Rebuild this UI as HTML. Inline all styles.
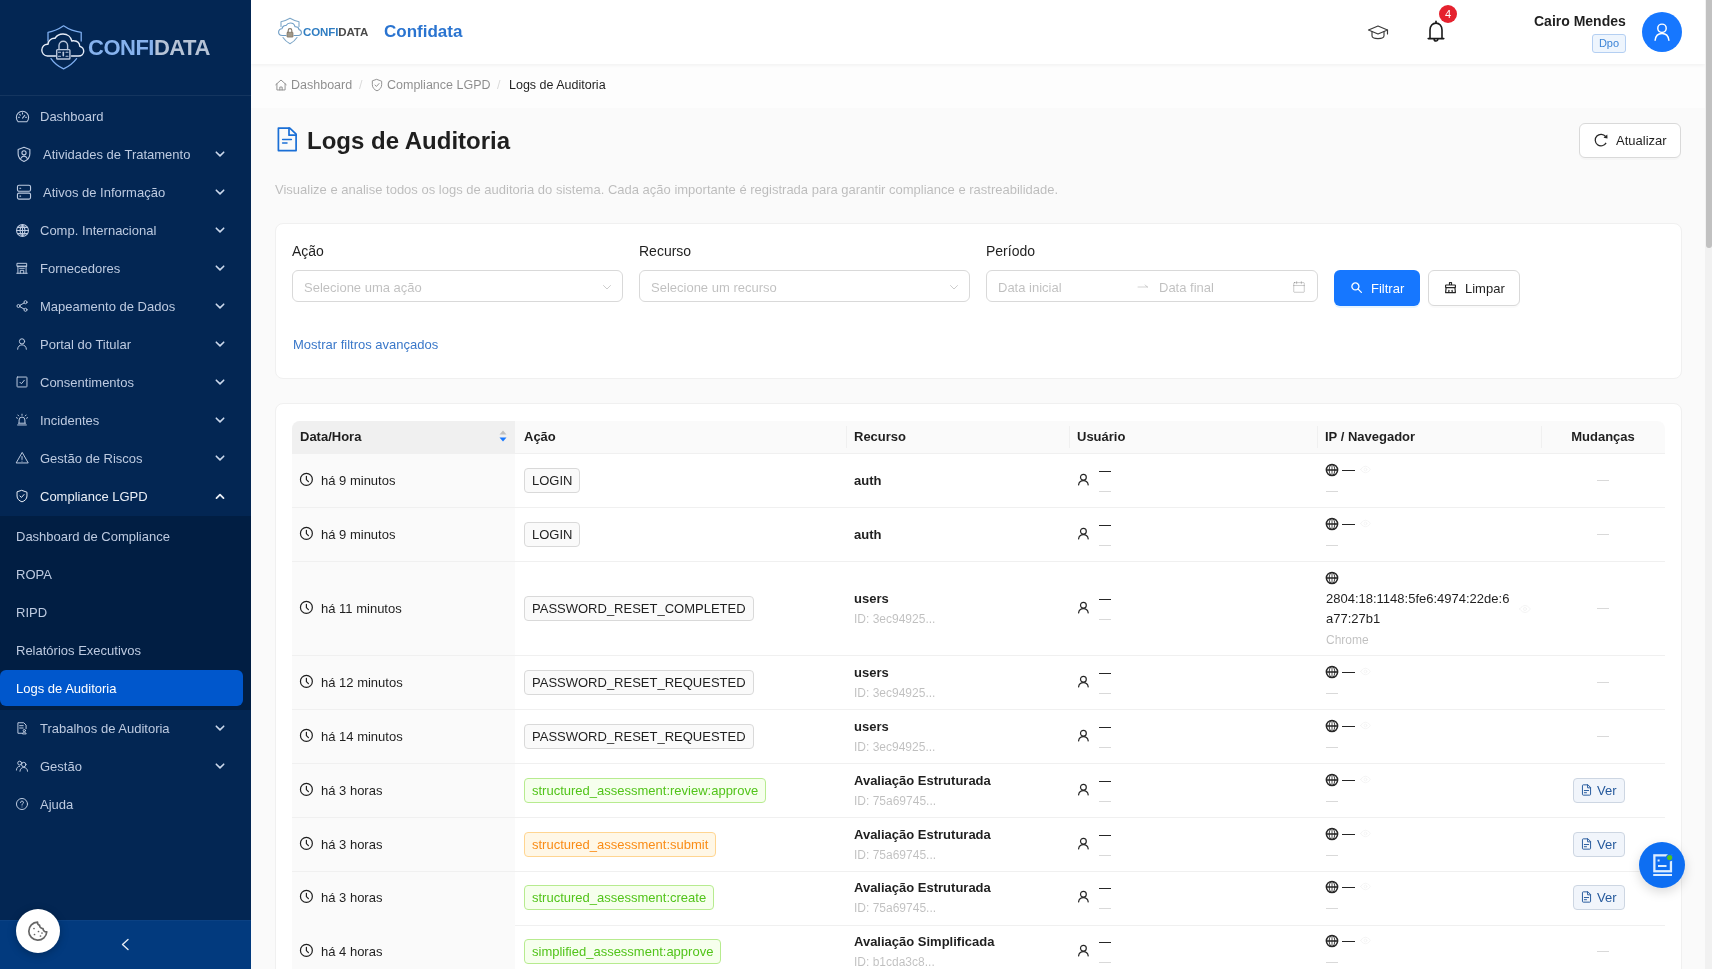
<!DOCTYPE html>
<html><head><meta charset="utf-8"><title>Logs de Auditoria</title>
<style>
*{box-sizing:border-box;margin:0;padding:0}
.g{will-change:transform}
html,body{width:1712px;height:969px;overflow:hidden;font-family:"Liberation Sans",sans-serif;font-size:13px;color:rgba(0,0,0,0.88);background:#fafafa;position:relative}
#side{position:absolute;left:0;top:0;width:251px;height:969px;background:#032653;overflow:hidden;z-index:2}
#side .st{position:absolute;height:38px;line-height:38px;font-size:13px;white-space:nowrap;will-change:transform}
#sub{position:absolute;left:0;top:516px;width:251px;height:194px;background:#011e43}
#crumb{position:absolute;left:251px;top:64px;width:1454px;height:44px;background:#fdfdfd}
#hdr{position:absolute;left:251px;top:0;width:1454px;height:64px;background:#fff;box-shadow:0 1px 4px rgba(0,0,0,0.06);z-index:1}
#sb{position:absolute;left:1705px;top:0;width:7px;height:969px;background:#f1f1f1;z-index:3}
#sb .th{position:absolute;left:1px;top:0;width:6px;height:248px;background:#c1c1c1;border-radius:0 0 3px 3px}
</style></head>
<body>
<div id="crumb"></div>
<svg style="position:absolute;left:274px;top:78px;width:14px;height:14px" viewBox="0 0 24 24" fill="none" stroke="#8c8c8c" stroke-width="1.6" stroke-linecap="round" stroke-linejoin="round"><path d="M3 11.5L12 3.5l9 8"/><path d="M5 10v10.5h14V10"/><path d="M10 20.5v-5h4v5"/></svg>
<div style="position:absolute;left:291px;top:74.7px;font-size:12.5px;line-height:20px;color:rgba(0,0,0,0.45);white-space:nowrap;will-change:transform;">Dashboard</div>
<div style="position:absolute;left:359px;top:74.7px;font-size:12.5px;line-height:20px;color:rgba(0,0,0,0.15);white-space:nowrap;will-change:transform;">/</div>
<svg style="position:absolute;left:370px;top:78px;width:14px;height:14px" viewBox="0 0 24 24" fill="none" stroke="#8c8c8c" stroke-width="1.6" stroke-linecap="round" stroke-linejoin="round"><path d="M12 2.5l8 3v6c0 5-3.5 8.8-8 10.5c-4.5-1.7-8-5.5-8-10.5v-6z"/><path d="M8.5 12l2.5 2.5l4.5-5"/></svg>
<div style="position:absolute;left:387px;top:74.7px;font-size:12.5px;line-height:20px;color:rgba(0,0,0,0.45);white-space:nowrap;will-change:transform;">Compliance LGPD</div>
<div style="position:absolute;left:497px;top:74.7px;font-size:12.5px;line-height:20px;color:rgba(0,0,0,0.15);white-space:nowrap;will-change:transform;">/</div>
<div style="position:absolute;left:509px;top:74.7px;font-size:12.5px;line-height:20px;color:rgba(0,0,0,0.88);white-space:nowrap;will-change:transform;">Logs de Auditoria</div>
<svg style="position:absolute;left:276px;top:125px;width:22px;height:28px" viewBox="0 0 22 28" fill="none" stroke="#1a6fd6" stroke-width="1.7" stroke-linecap="round" stroke-linejoin="round"><path d="M2.4 3.1H13.8L20.1 9.1V25.6H2.4z"/><path d="M13 3.1V10.2H20.1"/><path d="M6.6 14.5h8.8M6.6 18h4.4" stroke-width="1.5"/></svg>
<div style="position:absolute;left:307px;top:126.0px;font-size:24px;line-height:30px;color:rgba(0,0,0,0.88);font-weight:bold;white-space:nowrap;will-change:transform;">Logs de Auditoria</div>
<div style="position:absolute;left:1579px;top:123px;width:102px;height:35px;background:#fff;border:1px solid #d9d9d9;border-radius:6px;box-shadow:0 2px 0 rgba(0,0,0,0.02)"></div>
<svg style="position:absolute;left:1593px;top:132px;width:16px;height:16px" viewBox="0 0 16 16" fill="none" stroke="#262626" stroke-width="1.25"><path d="M12.6 4.5A5.8 5.8 0 1 0 13.1 10.9"/><path d="M14.3 2.4L14.5 6.5L10.5 5.7Z" fill="#262626" stroke="none"/></svg>
<div style="position:absolute;left:1616px;top:130.5px;font-size:13px;line-height:20px;color:rgba(0,0,0,0.88);white-space:nowrap;will-change:transform;">Atualizar</div>
<div style="position:absolute;left:275px;top:179.5px;font-size:13px;line-height:20px;color:rgba(0,0,0,0.25);white-space:nowrap;will-change:transform;">Visualize e analise todos os logs de auditoria do sistema. Cada ação importante é registrada para garantir compliance e rastreabilidade.</div>
<div style="position:absolute;left:275px;top:223px;width:1407px;height:156px;background:#fff;border:1px solid #f0f0f0;border-radius:8px"></div>
<div style="position:absolute;left:292px;top:240.5px;font-size:14px;line-height:20px;color:rgba(0,0,0,0.88);white-space:nowrap;will-change:transform;">Ação</div>
<div style="position:absolute;left:639px;top:240.5px;font-size:14px;line-height:20px;color:rgba(0,0,0,0.88);white-space:nowrap;will-change:transform;">Recurso</div>
<div style="position:absolute;left:986px;top:240.5px;font-size:14px;line-height:20px;color:rgba(0,0,0,0.88);white-space:nowrap;will-change:transform;">Período</div>
<div style="position:absolute;left:292px;top:270px;width:331px;height:32px;background:#fff;border:1px solid #d9d9d9;border-radius:6px"></div>
<div style="position:absolute;left:304px;top:277.5px;font-size:13px;line-height:20px;color:rgba(0,0,0,0.25);white-space:nowrap;will-change:transform;">Selecione uma ação</div>
<svg style="position:absolute;left:601px;top:281px;width:12px;height:12px" viewBox="0 0 24 24" fill="none" stroke="rgba(0,0,0,0.25)" stroke-width="1.6" stroke-linecap="round" stroke-linejoin="round"><path d="M5 9l7 7l7-7"/></svg>
<div style="position:absolute;left:639px;top:270px;width:331px;height:32px;background:#fff;border:1px solid #d9d9d9;border-radius:6px"></div>
<div style="position:absolute;left:651px;top:277.5px;font-size:13px;line-height:20px;color:rgba(0,0,0,0.25);white-space:nowrap;will-change:transform;">Selecione um recurso</div>
<svg style="position:absolute;left:948px;top:281px;width:12px;height:12px" viewBox="0 0 24 24" fill="none" stroke="rgba(0,0,0,0.25)" stroke-width="1.6" stroke-linecap="round" stroke-linejoin="round"><path d="M5 9l7 7l7-7"/></svg>
<div style="position:absolute;left:986px;top:270px;width:332px;height:32px;background:#fff;border:1px solid #d9d9d9;border-radius:6px"></div>
<div style="position:absolute;left:998px;top:278.0px;font-size:13px;line-height:20px;color:rgba(0,0,0,0.25);white-space:nowrap;will-change:transform;">Data inicial</div>
<svg style="position:absolute;left:1136px;top:281px;width:14px;height:12px" viewBox="0 0 24 24" fill="none" stroke="rgba(0,0,0,0.25)" stroke-width="1.4" stroke-linecap="round" stroke-linejoin="round"><path d="M2 12h19M16 8l5 4"/></svg>
<div style="position:absolute;left:1159px;top:278.0px;font-size:13px;line-height:20px;color:rgba(0,0,0,0.25);white-space:nowrap;will-change:transform;">Data final</div>
<svg style="position:absolute;left:1292px;top:280px;width:14px;height:14px" viewBox="0 0 24 24" fill="none" stroke="rgba(0,0,0,0.25)" stroke-width="1.4" stroke-linecap="round" stroke-linejoin="round"><rect x="3" y="4.5" width="18" height="16.5" rx="1"/><path d="M3 9.5h18M8 2.5v4M16 2.5v4"/></svg>
<div style="position:absolute;left:1334px;top:270px;width:86px;height:36px;background:#1677ff;border-radius:6px;box-shadow:0 2px 0 rgba(5,145,255,0.1)"></div>
<svg style="position:absolute;left:1350px;top:281px;width:13px;height:13px" viewBox="0 0 24 24" fill="none" stroke="#fff" stroke-width="2.4" stroke-linecap="round" stroke-linejoin="round"><circle cx="10" cy="10" r="6.5"/><path d="M15 15l6 6"/></svg>
<div style="position:absolute;left:1371px;top:278.5px;font-size:13px;line-height:20px;color:#fff;white-space:nowrap;will-change:transform;">Filtrar</div>
<div style="position:absolute;left:1428px;top:270px;width:92px;height:36px;background:#fff;border:1px solid #d9d9d9;border-radius:6px;box-shadow:0 2px 0 rgba(0,0,0,0.02)"></div>
<svg style="position:absolute;left:1442px;top:279px;width:18px;height:18px" viewBox="0 0 18 18" fill="none" stroke="#262626" stroke-width="1.2" stroke-linejoin="round"><path d="M7.5 6V3.5H9.5V6"/><rect x="3.6" y="6" width="9.8" height="2.6" rx="0.6"/><path d="M4.1 8.6L3.6 13.6H13.4L12.9 8.6"/><path d="M6.7 13.6L7 10.9M10.3 13.6L10 10.9"/></svg>
<div style="position:absolute;left:1465px;top:278.5px;font-size:13px;line-height:20px;color:rgba(0,0,0,0.88);white-space:nowrap;will-change:transform;">Limpar</div>
<div style="position:absolute;left:293px;top:334.5px;font-size:13px;line-height:20px;color:#3a78c9;white-space:nowrap;will-change:transform;">Mostrar filtros avançados</div>
<div style="position:absolute;left:275px;top:403px;width:1407px;height:600px;background:#fff;border:1px solid #f0f0f0;border-radius:8px"></div>
<div style="position:absolute;left:292px;top:421px;width:1373px;height:33px;background:#fafafa;border-radius:8px 8px 0 0;border-bottom:1px solid #f0f0f0"></div>
<div style="position:absolute;left:292px;top:421px;width:223px;height:33px;background:#f0f0f0;border-radius:8px 0 0 0;border-bottom:1px solid #f0f0f0"></div>
<div style="position:absolute;left:300px;top:427.0px;font-size:13px;line-height:20px;color:rgba(0,0,0,0.88);font-weight:bold;white-space:nowrap;will-change:transform;">Data/Hora</div>
<svg style="position:absolute;left:498px;top:429px;width:10px;height:14px;" viewBox="0 0 10 14"><path d="M1.5 5.5L5 1.5L8.5 5.5z" fill="rgba(0,0,0,0.2)"/><path d="M1.5 8.5L5 12.5L8.5 8.5z" fill="#1677ff"/></svg>
<div style="position:absolute;left:846px;top:426px;width:1px;height:22px;background:#f0f0f0"></div>
<div style="position:absolute;left:1069px;top:426px;width:1px;height:22px;background:#f0f0f0"></div>
<div style="position:absolute;left:1317px;top:426px;width:1px;height:22px;background:#f0f0f0"></div>
<div style="position:absolute;left:1541px;top:426px;width:1px;height:22px;background:#f0f0f0"></div>
<div style="position:absolute;left:524px;top:427.0px;font-size:13px;line-height:20px;color:rgba(0,0,0,0.88);font-weight:bold;white-space:nowrap;will-change:transform;">Ação</div>
<div style="position:absolute;left:854px;top:427.0px;font-size:13px;line-height:20px;color:rgba(0,0,0,0.88);font-weight:bold;white-space:nowrap;will-change:transform;">Recurso</div>
<div style="position:absolute;left:1077px;top:427.0px;font-size:13px;line-height:20px;color:rgba(0,0,0,0.88);font-weight:bold;white-space:nowrap;will-change:transform;">Usuário</div>
<div style="position:absolute;left:1325px;top:427.0px;font-size:13px;line-height:20px;color:rgba(0,0,0,0.88);font-weight:bold;white-space:nowrap;will-change:transform;">IP / Navegador</div>
<div class="g" style="position:absolute;left:1541px;top:427px;width:124px;height:20px;font-size:13px;line-height:20px;font-weight:bold;color:rgba(0,0,0,0.88);text-align:center">Mudanças</div>
<div style="position:absolute;left:292px;top:454px;width:223px;height:54px;background:#fafafa;border-bottom:1px solid #f0f0f0"></div>
<div style="position:absolute;left:515px;top:454px;width:1150px;height:54px;border-bottom:1px solid #f0f0f0"></div>
<svg style="position:absolute;left:299px;top:472.0px;width:15px;height:15px" viewBox="0 0 15 15" fill="none" stroke="#1f1f1f" stroke-width="1.2" stroke-linecap="round" stroke-linejoin="round"><circle cx="7.4" cy="7.4" r="5.95"/><path d="M7.4 4.3V7.6L9.4 9.6"/></svg>
<div style="position:absolute;left:321px;top:471.0px;font-size:13px;line-height:20px;color:rgba(0,0,0,0.88);white-space:nowrap;will-change:transform;">há 9 minutos</div>
<div class="g" style="position:absolute;left:524px;top:467.5px;height:25px;padding:0 7px;border:1px solid #d9d9d9;background:#fafafa;color:rgba(0,0,0,0.88);border-radius:4px;font-size:13px;line-height:23px;white-space:nowrap">LOGIN</div>
<div style="position:absolute;left:854px;top:471.0px;font-size:13px;line-height:20px;color:rgba(0,0,0,0.88);font-weight:bold;white-space:nowrap;will-change:transform;">auth</div>
<svg style="position:absolute;left:1077px;top:473.0px;width:13px;height:14px" viewBox="0 0 13 14" fill="none" stroke="#262626" stroke-width="1.2" stroke-linecap="round" stroke-linejoin="round"><circle cx="6.4" cy="4.2" r="2.9"/><path d="M1.6 11.8C2 9.2 3.9 7.7 6.4 7.7S10.8 9.2 11.2 11.8"/></svg>
<div style="position:absolute;left:1099px;top:470.5px;width:12px;height:1.6px;background:#262626"></div>
<div style="position:absolute;left:1099px;top:490.5px;width:12px;height:1.2px;background:#d9d9d9"></div>
<svg style="position:absolute;left:1325px;top:462.5px;width:14px;height:14px" viewBox="0 0 14 14" fill="none" stroke="#262626" stroke-width="1.2" stroke-linecap="round" stroke-linejoin="round"><circle cx="7" cy="7" r="5.6" stroke-width="1.5"/><path d="M1.5 7h11" stroke-width="1.3"/><path d="M7 1.5v11" stroke-width="0.8"/><ellipse cx="7" cy="7" rx="2.8" ry="5.6" stroke-width="0.9"/></svg>
<div style="position:absolute;left:1342px;top:469.5px;width:13px;height:1.6px;background:#262626"></div>
<svg style="position:absolute;left:1360px;top:464.0px;width:11px;height:11px" viewBox="0 0 24 24" fill="none" stroke="#f3f3f3" stroke-width="1.8" stroke-linecap="round" stroke-linejoin="round"><path d="M1.5 12S5.5 5 12 5s10.5 7 10.5 7s-4 7-10.5 7S1.5 12 1.5 12z"/><circle cx="12" cy="12" r="3"/></svg>
<div style="position:absolute;left:1326px;top:490.5px;width:12px;height:1.2px;background:#d9d9d9"></div>
<div style="position:absolute;left:1597px;top:480.0px;width:12px;height:1.2px;background:#d9d9d9"></div>
<div style="position:absolute;left:292px;top:508px;width:223px;height:54px;background:#fafafa;border-bottom:1px solid #f0f0f0"></div>
<div style="position:absolute;left:515px;top:508px;width:1150px;height:54px;border-bottom:1px solid #f0f0f0"></div>
<svg style="position:absolute;left:299px;top:526.0px;width:15px;height:15px" viewBox="0 0 15 15" fill="none" stroke="#1f1f1f" stroke-width="1.2" stroke-linecap="round" stroke-linejoin="round"><circle cx="7.4" cy="7.4" r="5.95"/><path d="M7.4 4.3V7.6L9.4 9.6"/></svg>
<div style="position:absolute;left:321px;top:525.0px;font-size:13px;line-height:20px;color:rgba(0,0,0,0.88);white-space:nowrap;will-change:transform;">há 9 minutos</div>
<div class="g" style="position:absolute;left:524px;top:521.5px;height:25px;padding:0 7px;border:1px solid #d9d9d9;background:#fafafa;color:rgba(0,0,0,0.88);border-radius:4px;font-size:13px;line-height:23px;white-space:nowrap">LOGIN</div>
<div style="position:absolute;left:854px;top:525.0px;font-size:13px;line-height:20px;color:rgba(0,0,0,0.88);font-weight:bold;white-space:nowrap;will-change:transform;">auth</div>
<svg style="position:absolute;left:1077px;top:527.0px;width:13px;height:14px" viewBox="0 0 13 14" fill="none" stroke="#262626" stroke-width="1.2" stroke-linecap="round" stroke-linejoin="round"><circle cx="6.4" cy="4.2" r="2.9"/><path d="M1.6 11.8C2 9.2 3.9 7.7 6.4 7.7S10.8 9.2 11.2 11.8"/></svg>
<div style="position:absolute;left:1099px;top:524.5px;width:12px;height:1.6px;background:#262626"></div>
<div style="position:absolute;left:1099px;top:544.5px;width:12px;height:1.2px;background:#d9d9d9"></div>
<svg style="position:absolute;left:1325px;top:516.5px;width:14px;height:14px" viewBox="0 0 14 14" fill="none" stroke="#262626" stroke-width="1.2" stroke-linecap="round" stroke-linejoin="round"><circle cx="7" cy="7" r="5.6" stroke-width="1.5"/><path d="M1.5 7h11" stroke-width="1.3"/><path d="M7 1.5v11" stroke-width="0.8"/><ellipse cx="7" cy="7" rx="2.8" ry="5.6" stroke-width="0.9"/></svg>
<div style="position:absolute;left:1342px;top:523.5px;width:13px;height:1.6px;background:#262626"></div>
<svg style="position:absolute;left:1360px;top:518.0px;width:11px;height:11px" viewBox="0 0 24 24" fill="none" stroke="#f3f3f3" stroke-width="1.8" stroke-linecap="round" stroke-linejoin="round"><path d="M1.5 12S5.5 5 12 5s10.5 7 10.5 7s-4 7-10.5 7S1.5 12 1.5 12z"/><circle cx="12" cy="12" r="3"/></svg>
<div style="position:absolute;left:1326px;top:544.5px;width:12px;height:1.2px;background:#d9d9d9"></div>
<div style="position:absolute;left:1597px;top:534.0px;width:12px;height:1.2px;background:#d9d9d9"></div>
<div style="position:absolute;left:292px;top:562px;width:223px;height:94px;background:#fafafa;border-bottom:1px solid #f0f0f0"></div>
<div style="position:absolute;left:515px;top:562px;width:1150px;height:94px;border-bottom:1px solid #f0f0f0"></div>
<svg style="position:absolute;left:299px;top:600.0px;width:15px;height:15px" viewBox="0 0 15 15" fill="none" stroke="#1f1f1f" stroke-width="1.2" stroke-linecap="round" stroke-linejoin="round"><circle cx="7.4" cy="7.4" r="5.95"/><path d="M7.4 4.3V7.6L9.4 9.6"/></svg>
<div style="position:absolute;left:321px;top:599.0px;font-size:13px;line-height:20px;color:rgba(0,0,0,0.88);white-space:nowrap;will-change:transform;">há 11 minutos</div>
<div class="g" style="position:absolute;left:524px;top:595.5px;height:25px;padding:0 7px;border:1px solid #d9d9d9;background:#fafafa;color:rgba(0,0,0,0.88);border-radius:4px;font-size:13px;line-height:23px;white-space:nowrap">PASSWORD_RESET_COMPLETED</div>
<div style="position:absolute;left:854px;top:589.0px;font-size:13px;line-height:20px;color:rgba(0,0,0,0.88);font-weight:bold;white-space:nowrap;will-change:transform;">users</div>
<div style="position:absolute;left:854px;top:609.0px;font-size:12px;line-height:20px;color:rgba(0,0,0,0.25);white-space:nowrap;will-change:transform;">ID: 3ec94925...</div>
<svg style="position:absolute;left:1077px;top:601.0px;width:13px;height:14px" viewBox="0 0 13 14" fill="none" stroke="#262626" stroke-width="1.2" stroke-linecap="round" stroke-linejoin="round"><circle cx="6.4" cy="4.2" r="2.9"/><path d="M1.6 11.8C2 9.2 3.9 7.7 6.4 7.7S10.8 9.2 11.2 11.8"/></svg>
<div style="position:absolute;left:1099px;top:598.5px;width:12px;height:1.6px;background:#262626"></div>
<div style="position:absolute;left:1099px;top:618.5px;width:12px;height:1.2px;background:#d9d9d9"></div>
<svg style="position:absolute;left:1325px;top:570.5px;width:14px;height:14px" viewBox="0 0 14 14" fill="none" stroke="#262626" stroke-width="1.2" stroke-linecap="round" stroke-linejoin="round"><circle cx="7" cy="7" r="5.6" stroke-width="1.5"/><path d="M1.5 7h11" stroke-width="1.3"/><path d="M7 1.5v11" stroke-width="0.8"/><ellipse cx="7" cy="7" rx="2.8" ry="5.6" stroke-width="0.9"/></svg>
<div style="position:absolute;left:1326px;top:589.0px;font-size:13px;line-height:20px;color:rgba(0,0,0,0.88);white-space:nowrap;will-change:transform;">2804:18:1148:5fe6:4974:22de:6</div>
<div style="position:absolute;left:1326px;top:609.0px;font-size:13px;line-height:20px;color:rgba(0,0,0,0.88);white-space:nowrap;will-change:transform;">a77:27b1</div>
<div style="position:absolute;left:1326px;top:629.5px;font-size:12px;line-height:20px;color:rgba(0,0,0,0.25);white-space:nowrap;will-change:transform;">Chrome</div>
<svg style="position:absolute;left:1519px;top:603px;width:12px;height:12px" viewBox="0 0 24 24" fill="none" stroke="#f3f3f3" stroke-width="1.8" stroke-linecap="round" stroke-linejoin="round"><path d="M1.5 12S5.5 5 12 5s10.5 7 10.5 7s-4 7-10.5 7S1.5 12 1.5 12z"/><circle cx="12" cy="12" r="3"/></svg>
<div style="position:absolute;left:1597px;top:608.0px;width:12px;height:1.2px;background:#d9d9d9"></div>
<div style="position:absolute;left:292px;top:656px;width:223px;height:54px;background:#fafafa;border-bottom:1px solid #f0f0f0"></div>
<div style="position:absolute;left:515px;top:656px;width:1150px;height:54px;border-bottom:1px solid #f0f0f0"></div>
<svg style="position:absolute;left:299px;top:674.0px;width:15px;height:15px" viewBox="0 0 15 15" fill="none" stroke="#1f1f1f" stroke-width="1.2" stroke-linecap="round" stroke-linejoin="round"><circle cx="7.4" cy="7.4" r="5.95"/><path d="M7.4 4.3V7.6L9.4 9.6"/></svg>
<div style="position:absolute;left:321px;top:673.0px;font-size:13px;line-height:20px;color:rgba(0,0,0,0.88);white-space:nowrap;will-change:transform;">há 12 minutos</div>
<div class="g" style="position:absolute;left:524px;top:669.5px;height:25px;padding:0 7px;border:1px solid #d9d9d9;background:#fafafa;color:rgba(0,0,0,0.88);border-radius:4px;font-size:13px;line-height:23px;white-space:nowrap">PASSWORD_RESET_REQUESTED</div>
<div style="position:absolute;left:854px;top:663.0px;font-size:13px;line-height:20px;color:rgba(0,0,0,0.88);font-weight:bold;white-space:nowrap;will-change:transform;">users</div>
<div style="position:absolute;left:854px;top:683.0px;font-size:12px;line-height:20px;color:rgba(0,0,0,0.25);white-space:nowrap;will-change:transform;">ID: 3ec94925...</div>
<svg style="position:absolute;left:1077px;top:675.0px;width:13px;height:14px" viewBox="0 0 13 14" fill="none" stroke="#262626" stroke-width="1.2" stroke-linecap="round" stroke-linejoin="round"><circle cx="6.4" cy="4.2" r="2.9"/><path d="M1.6 11.8C2 9.2 3.9 7.7 6.4 7.7S10.8 9.2 11.2 11.8"/></svg>
<div style="position:absolute;left:1099px;top:672.5px;width:12px;height:1.6px;background:#262626"></div>
<div style="position:absolute;left:1099px;top:692.5px;width:12px;height:1.2px;background:#d9d9d9"></div>
<svg style="position:absolute;left:1325px;top:664.5px;width:14px;height:14px" viewBox="0 0 14 14" fill="none" stroke="#262626" stroke-width="1.2" stroke-linecap="round" stroke-linejoin="round"><circle cx="7" cy="7" r="5.6" stroke-width="1.5"/><path d="M1.5 7h11" stroke-width="1.3"/><path d="M7 1.5v11" stroke-width="0.8"/><ellipse cx="7" cy="7" rx="2.8" ry="5.6" stroke-width="0.9"/></svg>
<div style="position:absolute;left:1342px;top:671.5px;width:13px;height:1.6px;background:#262626"></div>
<svg style="position:absolute;left:1360px;top:666.0px;width:11px;height:11px" viewBox="0 0 24 24" fill="none" stroke="#f3f3f3" stroke-width="1.8" stroke-linecap="round" stroke-linejoin="round"><path d="M1.5 12S5.5 5 12 5s10.5 7 10.5 7s-4 7-10.5 7S1.5 12 1.5 12z"/><circle cx="12" cy="12" r="3"/></svg>
<div style="position:absolute;left:1326px;top:692.5px;width:12px;height:1.2px;background:#d9d9d9"></div>
<div style="position:absolute;left:1597px;top:682.0px;width:12px;height:1.2px;background:#d9d9d9"></div>
<div style="position:absolute;left:292px;top:710px;width:223px;height:54px;background:#fafafa;border-bottom:1px solid #f0f0f0"></div>
<div style="position:absolute;left:515px;top:710px;width:1150px;height:54px;border-bottom:1px solid #f0f0f0"></div>
<svg style="position:absolute;left:299px;top:728.0px;width:15px;height:15px" viewBox="0 0 15 15" fill="none" stroke="#1f1f1f" stroke-width="1.2" stroke-linecap="round" stroke-linejoin="round"><circle cx="7.4" cy="7.4" r="5.95"/><path d="M7.4 4.3V7.6L9.4 9.6"/></svg>
<div style="position:absolute;left:321px;top:727.0px;font-size:13px;line-height:20px;color:rgba(0,0,0,0.88);white-space:nowrap;will-change:transform;">há 14 minutos</div>
<div class="g" style="position:absolute;left:524px;top:723.5px;height:25px;padding:0 7px;border:1px solid #d9d9d9;background:#fafafa;color:rgba(0,0,0,0.88);border-radius:4px;font-size:13px;line-height:23px;white-space:nowrap">PASSWORD_RESET_REQUESTED</div>
<div style="position:absolute;left:854px;top:717.0px;font-size:13px;line-height:20px;color:rgba(0,0,0,0.88);font-weight:bold;white-space:nowrap;will-change:transform;">users</div>
<div style="position:absolute;left:854px;top:737.0px;font-size:12px;line-height:20px;color:rgba(0,0,0,0.25);white-space:nowrap;will-change:transform;">ID: 3ec94925...</div>
<svg style="position:absolute;left:1077px;top:729.0px;width:13px;height:14px" viewBox="0 0 13 14" fill="none" stroke="#262626" stroke-width="1.2" stroke-linecap="round" stroke-linejoin="round"><circle cx="6.4" cy="4.2" r="2.9"/><path d="M1.6 11.8C2 9.2 3.9 7.7 6.4 7.7S10.8 9.2 11.2 11.8"/></svg>
<div style="position:absolute;left:1099px;top:726.5px;width:12px;height:1.6px;background:#262626"></div>
<div style="position:absolute;left:1099px;top:746.5px;width:12px;height:1.2px;background:#d9d9d9"></div>
<svg style="position:absolute;left:1325px;top:718.5px;width:14px;height:14px" viewBox="0 0 14 14" fill="none" stroke="#262626" stroke-width="1.2" stroke-linecap="round" stroke-linejoin="round"><circle cx="7" cy="7" r="5.6" stroke-width="1.5"/><path d="M1.5 7h11" stroke-width="1.3"/><path d="M7 1.5v11" stroke-width="0.8"/><ellipse cx="7" cy="7" rx="2.8" ry="5.6" stroke-width="0.9"/></svg>
<div style="position:absolute;left:1342px;top:725.5px;width:13px;height:1.6px;background:#262626"></div>
<svg style="position:absolute;left:1360px;top:720.0px;width:11px;height:11px" viewBox="0 0 24 24" fill="none" stroke="#f3f3f3" stroke-width="1.8" stroke-linecap="round" stroke-linejoin="round"><path d="M1.5 12S5.5 5 12 5s10.5 7 10.5 7s-4 7-10.5 7S1.5 12 1.5 12z"/><circle cx="12" cy="12" r="3"/></svg>
<div style="position:absolute;left:1326px;top:746.5px;width:12px;height:1.2px;background:#d9d9d9"></div>
<div style="position:absolute;left:1597px;top:736.0px;width:12px;height:1.2px;background:#d9d9d9"></div>
<div style="position:absolute;left:292px;top:764px;width:223px;height:54px;background:#fafafa;border-bottom:1px solid #f0f0f0"></div>
<div style="position:absolute;left:515px;top:764px;width:1150px;height:54px;border-bottom:1px solid #f0f0f0"></div>
<svg style="position:absolute;left:299px;top:782.0px;width:15px;height:15px" viewBox="0 0 15 15" fill="none" stroke="#1f1f1f" stroke-width="1.2" stroke-linecap="round" stroke-linejoin="round"><circle cx="7.4" cy="7.4" r="5.95"/><path d="M7.4 4.3V7.6L9.4 9.6"/></svg>
<div style="position:absolute;left:321px;top:781.0px;font-size:13px;line-height:20px;color:rgba(0,0,0,0.88);white-space:nowrap;will-change:transform;">há 3 horas</div>
<div class="g" style="position:absolute;left:524px;top:777.5px;height:25px;padding:0 7px;border:1px solid #b7eb8f;background:#f6ffed;color:#52c41a;border-radius:4px;font-size:13px;line-height:23px;white-space:nowrap">structured_assessment:review:approve</div>
<div style="position:absolute;left:854px;top:771.0px;font-size:13px;line-height:20px;color:rgba(0,0,0,0.88);font-weight:bold;white-space:nowrap;will-change:transform;">Avaliação Estruturada</div>
<div style="position:absolute;left:854px;top:791.0px;font-size:12px;line-height:20px;color:rgba(0,0,0,0.25);white-space:nowrap;will-change:transform;">ID: 75a69745...</div>
<svg style="position:absolute;left:1077px;top:783.0px;width:13px;height:14px" viewBox="0 0 13 14" fill="none" stroke="#262626" stroke-width="1.2" stroke-linecap="round" stroke-linejoin="round"><circle cx="6.4" cy="4.2" r="2.9"/><path d="M1.6 11.8C2 9.2 3.9 7.7 6.4 7.7S10.8 9.2 11.2 11.8"/></svg>
<div style="position:absolute;left:1099px;top:780.5px;width:12px;height:1.6px;background:#262626"></div>
<div style="position:absolute;left:1099px;top:800.5px;width:12px;height:1.2px;background:#d9d9d9"></div>
<svg style="position:absolute;left:1325px;top:772.5px;width:14px;height:14px" viewBox="0 0 14 14" fill="none" stroke="#262626" stroke-width="1.2" stroke-linecap="round" stroke-linejoin="round"><circle cx="7" cy="7" r="5.6" stroke-width="1.5"/><path d="M1.5 7h11" stroke-width="1.3"/><path d="M7 1.5v11" stroke-width="0.8"/><ellipse cx="7" cy="7" rx="2.8" ry="5.6" stroke-width="0.9"/></svg>
<div style="position:absolute;left:1342px;top:779.5px;width:13px;height:1.6px;background:#262626"></div>
<svg style="position:absolute;left:1360px;top:774.0px;width:11px;height:11px" viewBox="0 0 24 24" fill="none" stroke="#f3f3f3" stroke-width="1.8" stroke-linecap="round" stroke-linejoin="round"><path d="M1.5 12S5.5 5 12 5s10.5 7 10.5 7s-4 7-10.5 7S1.5 12 1.5 12z"/><circle cx="12" cy="12" r="3"/></svg>
<div style="position:absolute;left:1326px;top:800.5px;width:12px;height:1.2px;background:#d9d9d9"></div>
<div style="position:absolute;left:1573px;top:777.5px;width:52px;height:25px;border:1px solid #cdd6e2;background:#f1f5fb;border-radius:4px"></div>
<svg style="position:absolute;left:1580px;top:783.0px;width:13px;height:14px" viewBox="0 0 24 24" fill="none" stroke="#25599c" stroke-width="1.8" stroke-linecap="round" stroke-linejoin="round"><path d="M14 2.5H6a1.5 1.5 0 0 0-1.5 1.5v16A1.5 1.5 0 0 0 6 21.5h12a1.5 1.5 0 0 0 1.5-1.5V8z"/><path d="M14 2.5V8h5.5"/><path d="M8 13h8M8 17h4"/></svg>
<div style="position:absolute;left:1597px;top:781.0px;font-size:13px;line-height:20px;color:#25599c;white-space:nowrap;will-change:transform;">Ver</div>
<div style="position:absolute;left:292px;top:818px;width:223px;height:54px;background:#fafafa;border-bottom:1px solid #f0f0f0"></div>
<div style="position:absolute;left:515px;top:818px;width:1150px;height:54px;border-bottom:1px solid #f0f0f0"></div>
<svg style="position:absolute;left:299px;top:836.0px;width:15px;height:15px" viewBox="0 0 15 15" fill="none" stroke="#1f1f1f" stroke-width="1.2" stroke-linecap="round" stroke-linejoin="round"><circle cx="7.4" cy="7.4" r="5.95"/><path d="M7.4 4.3V7.6L9.4 9.6"/></svg>
<div style="position:absolute;left:321px;top:835.0px;font-size:13px;line-height:20px;color:rgba(0,0,0,0.88);white-space:nowrap;will-change:transform;">há 3 horas</div>
<div class="g" style="position:absolute;left:524px;top:831.5px;height:25px;padding:0 7px;border:1px solid #ffd591;background:#fff7e6;color:#fa8c16;border-radius:4px;font-size:13px;line-height:23px;white-space:nowrap">structured_assessment:submit</div>
<div style="position:absolute;left:854px;top:825.0px;font-size:13px;line-height:20px;color:rgba(0,0,0,0.88);font-weight:bold;white-space:nowrap;will-change:transform;">Avaliação Estruturada</div>
<div style="position:absolute;left:854px;top:845.0px;font-size:12px;line-height:20px;color:rgba(0,0,0,0.25);white-space:nowrap;will-change:transform;">ID: 75a69745...</div>
<svg style="position:absolute;left:1077px;top:837.0px;width:13px;height:14px" viewBox="0 0 13 14" fill="none" stroke="#262626" stroke-width="1.2" stroke-linecap="round" stroke-linejoin="round"><circle cx="6.4" cy="4.2" r="2.9"/><path d="M1.6 11.8C2 9.2 3.9 7.7 6.4 7.7S10.8 9.2 11.2 11.8"/></svg>
<div style="position:absolute;left:1099px;top:834.5px;width:12px;height:1.6px;background:#262626"></div>
<div style="position:absolute;left:1099px;top:854.5px;width:12px;height:1.2px;background:#d9d9d9"></div>
<svg style="position:absolute;left:1325px;top:826.5px;width:14px;height:14px" viewBox="0 0 14 14" fill="none" stroke="#262626" stroke-width="1.2" stroke-linecap="round" stroke-linejoin="round"><circle cx="7" cy="7" r="5.6" stroke-width="1.5"/><path d="M1.5 7h11" stroke-width="1.3"/><path d="M7 1.5v11" stroke-width="0.8"/><ellipse cx="7" cy="7" rx="2.8" ry="5.6" stroke-width="0.9"/></svg>
<div style="position:absolute;left:1342px;top:833.5px;width:13px;height:1.6px;background:#262626"></div>
<svg style="position:absolute;left:1360px;top:828.0px;width:11px;height:11px" viewBox="0 0 24 24" fill="none" stroke="#f3f3f3" stroke-width="1.8" stroke-linecap="round" stroke-linejoin="round"><path d="M1.5 12S5.5 5 12 5s10.5 7 10.5 7s-4 7-10.5 7S1.5 12 1.5 12z"/><circle cx="12" cy="12" r="3"/></svg>
<div style="position:absolute;left:1326px;top:854.5px;width:12px;height:1.2px;background:#d9d9d9"></div>
<div style="position:absolute;left:1573px;top:831.5px;width:52px;height:25px;border:1px solid #cdd6e2;background:#f1f5fb;border-radius:4px"></div>
<svg style="position:absolute;left:1580px;top:837.0px;width:13px;height:14px" viewBox="0 0 24 24" fill="none" stroke="#25599c" stroke-width="1.8" stroke-linecap="round" stroke-linejoin="round"><path d="M14 2.5H6a1.5 1.5 0 0 0-1.5 1.5v16A1.5 1.5 0 0 0 6 21.5h12a1.5 1.5 0 0 0 1.5-1.5V8z"/><path d="M14 2.5V8h5.5"/><path d="M8 13h8M8 17h4"/></svg>
<div style="position:absolute;left:1597px;top:835.0px;font-size:13px;line-height:20px;color:#25599c;white-space:nowrap;will-change:transform;">Ver</div>
<div style="position:absolute;left:292px;top:872px;width:223px;height:54px;background:#fafafa;border-bottom:1px solid #f0f0f0"></div>
<div style="position:absolute;left:515px;top:872px;width:1150px;height:54px;border-bottom:1px solid #f0f0f0"></div>
<svg style="position:absolute;left:299px;top:889.0px;width:15px;height:15px" viewBox="0 0 15 15" fill="none" stroke="#1f1f1f" stroke-width="1.2" stroke-linecap="round" stroke-linejoin="round"><circle cx="7.4" cy="7.4" r="5.95"/><path d="M7.4 4.3V7.6L9.4 9.6"/></svg>
<div style="position:absolute;left:321px;top:888.0px;font-size:13px;line-height:20px;color:rgba(0,0,0,0.88);white-space:nowrap;will-change:transform;">há 3 horas</div>
<div class="g" style="position:absolute;left:524px;top:884.5px;height:25px;padding:0 7px;border:1px solid #b7eb8f;background:#f6ffed;color:#52c41a;border-radius:4px;font-size:13px;line-height:23px;white-space:nowrap">structured_assessment:create</div>
<div style="position:absolute;left:854px;top:878.0px;font-size:13px;line-height:20px;color:rgba(0,0,0,0.88);font-weight:bold;white-space:nowrap;will-change:transform;">Avaliação Estruturada</div>
<div style="position:absolute;left:854px;top:898.0px;font-size:12px;line-height:20px;color:rgba(0,0,0,0.25);white-space:nowrap;will-change:transform;">ID: 75a69745...</div>
<svg style="position:absolute;left:1077px;top:890.0px;width:13px;height:14px" viewBox="0 0 13 14" fill="none" stroke="#262626" stroke-width="1.2" stroke-linecap="round" stroke-linejoin="round"><circle cx="6.4" cy="4.2" r="2.9"/><path d="M1.6 11.8C2 9.2 3.9 7.7 6.4 7.7S10.8 9.2 11.2 11.8"/></svg>
<div style="position:absolute;left:1099px;top:887.5px;width:12px;height:1.6px;background:#262626"></div>
<div style="position:absolute;left:1099px;top:907.5px;width:12px;height:1.2px;background:#d9d9d9"></div>
<svg style="position:absolute;left:1325px;top:879.5px;width:14px;height:14px" viewBox="0 0 14 14" fill="none" stroke="#262626" stroke-width="1.2" stroke-linecap="round" stroke-linejoin="round"><circle cx="7" cy="7" r="5.6" stroke-width="1.5"/><path d="M1.5 7h11" stroke-width="1.3"/><path d="M7 1.5v11" stroke-width="0.8"/><ellipse cx="7" cy="7" rx="2.8" ry="5.6" stroke-width="0.9"/></svg>
<div style="position:absolute;left:1342px;top:886.5px;width:13px;height:1.6px;background:#262626"></div>
<svg style="position:absolute;left:1360px;top:881.0px;width:11px;height:11px" viewBox="0 0 24 24" fill="none" stroke="#f3f3f3" stroke-width="1.8" stroke-linecap="round" stroke-linejoin="round"><path d="M1.5 12S5.5 5 12 5s10.5 7 10.5 7s-4 7-10.5 7S1.5 12 1.5 12z"/><circle cx="12" cy="12" r="3"/></svg>
<div style="position:absolute;left:1326px;top:907.5px;width:12px;height:1.2px;background:#d9d9d9"></div>
<div style="position:absolute;left:1573px;top:884.5px;width:52px;height:25px;border:1px solid #cdd6e2;background:#f1f5fb;border-radius:4px"></div>
<svg style="position:absolute;left:1580px;top:890.0px;width:13px;height:14px" viewBox="0 0 24 24" fill="none" stroke="#25599c" stroke-width="1.8" stroke-linecap="round" stroke-linejoin="round"><path d="M14 2.5H6a1.5 1.5 0 0 0-1.5 1.5v16A1.5 1.5 0 0 0 6 21.5h12a1.5 1.5 0 0 0 1.5-1.5V8z"/><path d="M14 2.5V8h5.5"/><path d="M8 13h8M8 17h4"/></svg>
<div style="position:absolute;left:1597px;top:888.0px;font-size:13px;line-height:20px;color:#25599c;white-space:nowrap;will-change:transform;">Ver</div>
<div style="position:absolute;left:292px;top:925px;width:223px;height:54px;background:#fafafa;border-bottom:1px solid #f0f0f0"></div>
<div style="position:absolute;left:515px;top:925px;width:1150px;height:54px;border-bottom:1px solid #f0f0f0"></div>
<svg style="position:absolute;left:299px;top:943.0px;width:15px;height:15px" viewBox="0 0 15 15" fill="none" stroke="#1f1f1f" stroke-width="1.2" stroke-linecap="round" stroke-linejoin="round"><circle cx="7.4" cy="7.4" r="5.95"/><path d="M7.4 4.3V7.6L9.4 9.6"/></svg>
<div style="position:absolute;left:321px;top:942.0px;font-size:13px;line-height:20px;color:rgba(0,0,0,0.88);white-space:nowrap;will-change:transform;">há 4 horas</div>
<div class="g" style="position:absolute;left:524px;top:938.5px;height:25px;padding:0 7px;border:1px solid #b7eb8f;background:#f6ffed;color:#52c41a;border-radius:4px;font-size:13px;line-height:23px;white-space:nowrap">simplified_assessment:approve</div>
<div style="position:absolute;left:854px;top:932.0px;font-size:13px;line-height:20px;color:rgba(0,0,0,0.88);font-weight:bold;white-space:nowrap;will-change:transform;">Avaliação Simplificada</div>
<div style="position:absolute;left:854px;top:952.0px;font-size:12px;line-height:20px;color:rgba(0,0,0,0.25);white-space:nowrap;will-change:transform;">ID: b1cda3c8...</div>
<svg style="position:absolute;left:1077px;top:944.0px;width:13px;height:14px" viewBox="0 0 13 14" fill="none" stroke="#262626" stroke-width="1.2" stroke-linecap="round" stroke-linejoin="round"><circle cx="6.4" cy="4.2" r="2.9"/><path d="M1.6 11.8C2 9.2 3.9 7.7 6.4 7.7S10.8 9.2 11.2 11.8"/></svg>
<div style="position:absolute;left:1099px;top:941.5px;width:12px;height:1.6px;background:#262626"></div>
<div style="position:absolute;left:1099px;top:961.5px;width:12px;height:1.2px;background:#d9d9d9"></div>
<svg style="position:absolute;left:1325px;top:933.5px;width:14px;height:14px" viewBox="0 0 14 14" fill="none" stroke="#262626" stroke-width="1.2" stroke-linecap="round" stroke-linejoin="round"><circle cx="7" cy="7" r="5.6" stroke-width="1.5"/><path d="M1.5 7h11" stroke-width="1.3"/><path d="M7 1.5v11" stroke-width="0.8"/><ellipse cx="7" cy="7" rx="2.8" ry="5.6" stroke-width="0.9"/></svg>
<div style="position:absolute;left:1342px;top:940.5px;width:13px;height:1.6px;background:#262626"></div>
<svg style="position:absolute;left:1360px;top:935.0px;width:11px;height:11px" viewBox="0 0 24 24" fill="none" stroke="#f3f3f3" stroke-width="1.8" stroke-linecap="round" stroke-linejoin="round"><path d="M1.5 12S5.5 5 12 5s10.5 7 10.5 7s-4 7-10.5 7S1.5 12 1.5 12z"/><circle cx="12" cy="12" r="3"/></svg>
<div style="position:absolute;left:1326px;top:961.5px;width:12px;height:1.2px;background:#d9d9d9"></div>
<div style="position:absolute;left:1597px;top:951.0px;width:12px;height:1.2px;background:#d9d9d9"></div>
<div style="position:absolute;left:1639px;top:842px;width:46px;height:46px;border-radius:50%;background:#0d6ef2;box-shadow:0 4px 12px rgba(0,0,0,0.15)"></div>
<svg style="position:absolute;left:1650px;top:852px;width:26px;height:26px;" viewBox="0 0 26 26" fill="none" stroke="#dcedff" stroke-linecap="butt" stroke-linejoin="miter"><rect x="4.35" y="3.35" width="16.6" height="15.9" stroke-width="2.3"/><path d="M7.6 8.4h2M8 14h8.5" stroke-width="2"/><path d="M3.2 23h18.8" stroke-width="2"/><circle cx="19.7" cy="5.6" r="3.2" fill="#52c41a" stroke="#0d6ef2" stroke-width="1.2"/></svg>
<div id="hdr">
<svg style="position:absolute;left:26px;top:17px;width:26px;height:28px" viewBox="0 0 26 28" fill="none" stroke-linecap="round" stroke-linejoin="round">
<path d="M4 9.5V4.8C7.5 4.3 10 3 13 1.3C16 3 18.5 4.3 22 4.8V9.5" stroke="#7ea7c8" stroke-width="1.1"/>
<path d="M6 20.5C8 23.5 10.5 25.5 13 26.7C15.5 25.5 18 23.5 20 20.5" stroke="#7ea7c8" stroke-width="1.1"/>
<path d="M9 18.5H5.3C3 18.5 1.6 16.8 1.6 15C1.6 13 3.2 11.6 5 11.8C5.3 9.6 7 8.2 9 8.5C10 7 11.5 6 13.3 6C15.8 6 17.6 7.6 18.1 9.8C20.3 9.7 21.8 11 22 12.6C23.6 13 24.4 14.3 24.4 15.6C24.4 17.3 23 18.5 21.2 18.5H17" stroke="#6e9cc4" stroke-width="1.1"/>
<path d="M11.2 15.5v-2c0-1.1.8-1.9 1.8-1.9s1.8.8 1.8 1.9v2" stroke="#80776a" stroke-width="1.1"/>
<rect x="10" y="15.3" width="6" height="4.8" rx="0.5" fill="#a39a8a" stroke="#7a7062" stroke-width="0.7"/>
</svg>
<div class="g" style="position:absolute;left:52px;top:25px;font-size:11.5px;font-weight:bold;letter-spacing:-0.1px;line-height:14px;white-space:nowrap"><span style="color:#2f7dc2">CONFI</span><span style="color:#4a4a4a">DATA</span></div>
<div class="g" style="position:absolute;left:133px;top:21px;font-size:17px;font-weight:bold;color:#2a74d0;line-height:22px;white-space:nowrap">Confidata</div>
<svg style="position:absolute;left:1116px;top:23px;width:22px;height:18px" viewBox="0 0 22 18" fill="none" stroke="#3a3a3a" stroke-width="1.15" stroke-linecap="round" stroke-linejoin="round"><path d="M20.5 7L11 3L1.5 7L11 11L20.5 7z"/><path d="M5 8.6v4.2c0 1.6 2.7 2.8 6 2.8s6-1.2 6-2.8V8.6"/><path d="M20.5 7v4"/></svg>
<svg style="position:absolute;left:1174px;top:19px;width:22px;height:24px" viewBox="0 0 22 24" fill="none" stroke="#1a1a1a" stroke-width="1.6" stroke-linecap="round" stroke-linejoin="round"><path d="M5 19.5V11C5 7 7.6 4.1 11 4.1S17 7 17 11V19.5"/><path d="M3.2 19.6h15.6"/><path d="M11 2.3v1.6"/><path d="M9.2 20.2a1.8 1.8 0 0 0 3.6 0"/></svg>
<div class="g" style="position:absolute;left:1188px;top:5px;width:18px;height:18px;border-radius:50%;background:#e5212e;color:#fff;font-size:11px;line-height:18px;text-align:center;box-shadow:0 0 0 1px #fff">4</div>
<div class="g" style="position:absolute;right:79px;top:13px;font-size:14px;font-weight:bold;color:#1f1f1f;line-height:16px;white-space:nowrap">Cairo Mendes</div>
<div class="g" style="position:absolute;left:1341px;top:34px;width:34px;height:19px;border:1px solid #b4cff2;background:#eef5fd;border-radius:3px;color:#3d84d6;font-size:11px;line-height:17px;text-align:center">Dpo</div>
<div style="position:absolute;left:1391px;top:12px;width:40px;height:40px;border-radius:50%;background:#1677ff"></div>
<svg style="position:absolute;left:1400px;top:21px;width:22px;height:22px" viewBox="0 0 24 24" fill="none" stroke="#fff" stroke-width="1.6" stroke-linecap="round" stroke-linejoin="round"><circle cx="12" cy="8" r="4.6"/><path d="M4.5 21c.5-4.5 3.6-7.3 7.5-7.3s7 2.8 7.5 7.3"/></svg>
</div>
<div id="side">
<svg style="position:absolute;left:38px;top:22px;width:50px;height:50px" viewBox="38 22 50 50" fill="none" stroke-linecap="round" stroke-linejoin="round">
<path d="M48 41V32.3C53.5 31.5 59 29 63.6 25.8C68.2 29 73.7 31.5 81.2 32.3V41" stroke="#7eaef0" stroke-width="1.3"/>
<path d="M51 58.6C54 63 58.5 66.5 63.6 68.9C68.7 66.5 73.2 63 76.6 58.6" stroke="#7eaef0" stroke-width="1.3"/>
<path d="M55.5 56H47.5C44 56 41.8 53 41.8 50C41.8 46.5 44.5 44 48 44.3C48.2 40.5 51.5 37.8 55 38.3C56.5 35.8 59.5 34 63 34C67.5 34 71 37 71.8 41C72.5 40.8 73.5 40.7 74 40.8C77.5 41 79.5 43.5 79.8 46.3C82.2 47 83.7 49 83.7 51.3C83.7 54 81.5 56 78.5 56H71.5" stroke="#e6ecf7" stroke-width="1.4"/>
<path d="M59 49.5V45.5C59 43 61 41.2 63.3 41.2C65.6 41.2 67.6 43 67.6 45.5V49.5" stroke="#b9c6dc" stroke-width="1.4"/>
<rect x="56.7" y="49.6" width="13.2" height="9.4" rx="0.8" stroke="#b9c6dc" stroke-width="1.4"/>
<path d="M58.5 52.3h2M58.5 56.2h2M66 52.3h2M66 56.2h2" stroke="#b9c6dc" stroke-width="1.1"/>
<path d="M63.3 52.2v3.6" stroke="#b9c6dc" stroke-width="1.6"/>
</svg>
<div class="g" style="position:absolute;left:88px;top:35px;font-size:22px;font-weight:bold;letter-spacing:-0.5px;line-height:26px;white-space:nowrap"><span style="color:#86b2ee">CONFI</span><span style="color:#b6c3d6">DATA</span></div>
<div style="position:absolute;left:0;top:95px;width:251px;height:1px;background:rgba(255,255,255,0.07)"></div>
<div id="sub"></div>
<div style="position:absolute;left:0;top:670px;width:243px;height:36px;background:#0057cc;border-radius:6px"></div>
<svg style="position:absolute;left:15px;top:109px;width:15px;height:15px" viewBox="0 0 24 24" fill="none" stroke="#bdcae0" stroke-width="1.7" stroke-linecap="round" stroke-linejoin="round"><path d="M5.2 20.5A9.8 9.8 0 1 1 18.8 20.5z"/><path d="M12 6.2v1.6M5.5 13.2h1.6M16.9 13.2h1.6M7.5 8.7l1 1M12 14.5l3.6-4.4"/></svg>
<div class="st" style="left:40px;top:98px;color:#bdcae0">Dashboard</div>
<svg style="position:absolute;left:16px;top:146px;width:16px;height:16px" viewBox="0 0 24 24" fill="none" stroke="#bdcae0" stroke-width="1.7" stroke-linecap="round" stroke-linejoin="round"><path d="M12 1.9l8.8 3.3v6.4c0 5.5-3.8 9.6-8.8 11.6c-5-2-8.8-6.1-8.8-11.6v-6.4z"/><circle cx="12" cy="10.3" r="3.1"/><path d="M7.3 18.6c.9-2.2 2.6-3.4 4.7-3.4s3.8 1.2 4.7 3.4"/></svg>
<div class="st" style="left:43px;top:136px;color:#bdcae0">Atividades de Tratamento</div>
<svg style="position:absolute;left:215px;top:151px;width:10px;height:7px" viewBox="0 0 10 7"><path d="M1.3 1.2L5 4.9L8.7 1.2" fill="none" stroke="#cbd8ec" stroke-width="1.6" stroke-linecap="round" stroke-linejoin="round"/></svg>
<svg style="position:absolute;left:16px;top:184px;width:16px;height:16px" viewBox="0 0 24 24" fill="none" stroke="#bdcae0" stroke-width="1.7" stroke-linecap="round" stroke-linejoin="round"><rect x="2.2" y="1.9" width="19.6" height="9" rx="2.2"/><rect x="2.2" y="13.6" width="19.6" height="9" rx="2.2"/><path d="M5.8 6.4h1.2M5.8 18.1h1.2"/></svg>
<div class="st" style="left:43px;top:174px;color:#bdcae0">Ativos de Informação</div>
<svg style="position:absolute;left:215px;top:189px;width:10px;height:7px" viewBox="0 0 10 7"><path d="M1.3 1.2L5 4.9L8.7 1.2" fill="none" stroke="#cbd8ec" stroke-width="1.6" stroke-linecap="round" stroke-linejoin="round"/></svg>
<svg style="position:absolute;left:15px;top:223px;width:15px;height:15px" viewBox="0 0 24 24" fill="none" stroke="#bdcae0" stroke-width="1.7" stroke-linecap="round" stroke-linejoin="round"><circle cx="12" cy="12" r="9.5"/><path d="M2.5 12h19M12 2.5v19M4 7h16M4 17h16"/><path d="M12 2.5c-3 2.5-4 6-4 9.5s1 7 4 9.5M12 2.5c3 2.5 4 6 4 9.5s-1 7-4 9.5"/></svg>
<div class="st" style="left:40px;top:212px;color:#bdcae0">Comp. Internacional</div>
<svg style="position:absolute;left:215px;top:227px;width:10px;height:7px" viewBox="0 0 10 7"><path d="M1.3 1.2L5 4.9L8.7 1.2" fill="none" stroke="#cbd8ec" stroke-width="1.6" stroke-linecap="round" stroke-linejoin="round"/></svg>
<svg style="position:absolute;left:15px;top:261px;width:14px;height:14px" viewBox="0 0 24 24" fill="none" stroke="#bdcae0" stroke-width="1.7" stroke-linecap="round" stroke-linejoin="round"><path d="M3 21h18"/><path d="M4 4h16v5H4z"/><path d="M5 9v12M19 9v12"/><path d="M4 9h16"/><path d="M9 21v-5h6v5"/><path d="M8 12.5h8"/></svg>
<div class="st" style="left:40px;top:250px;color:#bdcae0">Fornecedores</div>
<svg style="position:absolute;left:215px;top:265px;width:10px;height:7px" viewBox="0 0 10 7"><path d="M1.3 1.2L5 4.9L8.7 1.2" fill="none" stroke="#cbd8ec" stroke-width="1.6" stroke-linecap="round" stroke-linejoin="round"/></svg>
<svg style="position:absolute;left:15px;top:299px;width:14px;height:14px" viewBox="0 0 24 24" fill="none" stroke="#bdcae0" stroke-width="1.7" stroke-linecap="round" stroke-linejoin="round"><circle cx="6" cy="12" r="2.6"/><circle cx="18" cy="5.5" r="2.6"/><circle cx="18" cy="18.5" r="2.6"/><path d="M8.3 10.8l7.4-4M8.3 13.2l7.4 4"/></svg>
<div class="st" style="left:40px;top:288px;color:#bdcae0">Mapeamento de Dados</div>
<svg style="position:absolute;left:215px;top:303px;width:10px;height:7px" viewBox="0 0 10 7"><path d="M1.3 1.2L5 4.9L8.7 1.2" fill="none" stroke="#cbd8ec" stroke-width="1.6" stroke-linecap="round" stroke-linejoin="round"/></svg>
<svg style="position:absolute;left:15px;top:337px;width:14px;height:14px" viewBox="0 0 24 24" fill="none" stroke="#bdcae0" stroke-width="1.7" stroke-linecap="round" stroke-linejoin="round"><circle cx="12" cy="7.5" r="4.5"/><path d="M4.5 21c0-4.5 3.3-7.5 7.5-7.5s7.5 3 7.5 7.5"/></svg>
<div class="st" style="left:40px;top:326px;color:#bdcae0">Portal do Titular</div>
<svg style="position:absolute;left:215px;top:341px;width:10px;height:7px" viewBox="0 0 10 7"><path d="M1.3 1.2L5 4.9L8.7 1.2" fill="none" stroke="#cbd8ec" stroke-width="1.6" stroke-linecap="round" stroke-linejoin="round"/></svg>
<svg style="position:absolute;left:15px;top:375px;width:14px;height:14px" viewBox="0 0 24 24" fill="none" stroke="#bdcae0" stroke-width="1.7" stroke-linecap="round" stroke-linejoin="round"><rect x="3.5" y="3.5" width="17" height="17" rx="1"/><path d="M8.5 12.5l2.5 2.5l5-6"/></svg>
<div class="st" style="left:40px;top:364px;color:#bdcae0">Consentimentos</div>
<svg style="position:absolute;left:215px;top:379px;width:10px;height:7px" viewBox="0 0 10 7"><path d="M1.3 1.2L5 4.9L8.7 1.2" fill="none" stroke="#cbd8ec" stroke-width="1.6" stroke-linecap="round" stroke-linejoin="round"/></svg>
<svg style="position:absolute;left:15px;top:413px;width:14px;height:14px" viewBox="0 0 24 24" fill="none" stroke="#bdcae0" stroke-width="1.7" stroke-linecap="round" stroke-linejoin="round"><path d="M7 17v-5a5 5 0 0 1 10 0v5"/><path d="M4.5 20.5h15"/><path d="M6 17.5h12"/><path d="M12 2v2M2.5 8l1.7 1M21.5 8l-1.7 1M5 3.5l1.3 1.5M19 3.5l-1.3 1.5"/></svg>
<div class="st" style="left:40px;top:402px;color:#bdcae0">Incidentes</div>
<svg style="position:absolute;left:215px;top:417px;width:10px;height:7px" viewBox="0 0 10 7"><path d="M1.3 1.2L5 4.9L8.7 1.2" fill="none" stroke="#cbd8ec" stroke-width="1.6" stroke-linecap="round" stroke-linejoin="round"/></svg>
<svg style="position:absolute;left:15px;top:451px;width:14px;height:14px" viewBox="0 0 24 24" fill="none" stroke="#bdcae0" stroke-width="1.7" stroke-linecap="round" stroke-linejoin="round"><path d="M12 3L2 20.5h20z"/><path d="M12 9.5v5M12 17.5h.01"/></svg>
<div class="st" style="left:40px;top:440px;color:#bdcae0">Gestão de Riscos</div>
<svg style="position:absolute;left:215px;top:455px;width:10px;height:7px" viewBox="0 0 10 7"><path d="M1.3 1.2L5 4.9L8.7 1.2" fill="none" stroke="#cbd8ec" stroke-width="1.6" stroke-linecap="round" stroke-linejoin="round"/></svg>
<svg style="position:absolute;left:15px;top:489px;width:14px;height:14px" viewBox="0 0 24 24" fill="none" stroke="#e9eef6" stroke-width="1.7" stroke-linecap="round" stroke-linejoin="round"><path d="M12 2.5l8.5 3v6.5c0 5-3.7 8.5-8.5 10c-4.8-1.5-8.5-5-8.5-10v-6.5z"/><path d="M8.5 12l2.5 2.5l4.5-5"/></svg>
<div class="st" style="left:40px;top:478px;color:#e9eef6">Compliance LGPD</div>
<svg style="position:absolute;left:215px;top:493px;width:10px;height:7px" viewBox="0 0 10 7"><path d="M1.5 5.1L5 1.6L8.5 5.1" fill="none" stroke="#e9eef6" stroke-width="1.8" stroke-linecap="round" stroke-linejoin="round"/></svg>
<svg style="position:absolute;left:15px;top:721px;width:14px;height:14px" viewBox="0 0 24 24" fill="none" stroke="#bdcae0" stroke-width="1.7" stroke-linecap="round" stroke-linejoin="round"><path d="M13 21H5V3h10l4 4v6"/><path d="M8 8h6M8 12h6"/><circle cx="16" cy="16.5" r="2"/><path d="M13 21.5c.5-1.5 1.7-2.5 3-2.5s2.5 1 3 2.5z"/></svg>
<div class="st" style="left:40px;top:710px;color:#bdcae0">Trabalhos de Auditoria</div>
<svg style="position:absolute;left:215px;top:725px;width:10px;height:7px" viewBox="0 0 10 7"><path d="M1.3 1.2L5 4.9L8.7 1.2" fill="none" stroke="#cbd8ec" stroke-width="1.6" stroke-linecap="round" stroke-linejoin="round"/></svg>
<svg style="position:absolute;left:15px;top:759px;width:14px;height:14px" viewBox="0 0 24 24" fill="none" stroke="#bdcae0" stroke-width="1.7" stroke-linecap="round" stroke-linejoin="round"><circle cx="8" cy="7" r="3.3"/><path d="M2.5 19c0-4 2.5-6.5 5.5-6.5"/><circle cx="15" cy="9.5" r="3.8"/><path d="M8.5 21c0-4 3-6.5 6.5-6.5s6.5 2.5 6.5 6.5"/></svg>
<div class="st" style="left:40px;top:748px;color:#bdcae0">Gestão</div>
<svg style="position:absolute;left:215px;top:763px;width:10px;height:7px" viewBox="0 0 10 7"><path d="M1.3 1.2L5 4.9L8.7 1.2" fill="none" stroke="#cbd8ec" stroke-width="1.6" stroke-linecap="round" stroke-linejoin="round"/></svg>
<svg style="position:absolute;left:15px;top:797px;width:14px;height:14px" viewBox="0 0 24 24" fill="none" stroke="#bdcae0" stroke-width="1.7" stroke-linecap="round" stroke-linejoin="round"><circle cx="12" cy="12" r="9.5"/><path d="M9.5 9.5a2.5 2.5 0 1 1 3.5 2.3c-.6.3-1 .8-1 1.5v.7"/><path d="M12 17.2h.01"/></svg>
<div class="st" style="left:40px;top:786px;color:#bdcae0">Ajuda</div>
<div class="st" style="left:16px;top:518px;color:#bdcae0">Dashboard de Compliance</div>
<div class="st" style="left:16px;top:556px;color:#bdcae0">ROPA</div>
<div class="st" style="left:16px;top:594px;color:#bdcae0">RIPD</div>
<div class="st" style="left:16px;top:632px;color:#bdcae0">Relatórios Executivos</div>
<div class="st" style="left:16px;top:670px;color:#ffffff">Logs de Auditoria</div>
<div style="position:absolute;left:0;top:920px;width:251px;height:49px;background:#023a7e;box-shadow:inset 0 1px 0 rgba(255,255,255,0.04)"></div>
<svg style="position:absolute;left:120px;top:938px;width:10px;height:13px" viewBox="0 0 10 13"><path d="M8 1.5L2.5 6.5L8 11.5" fill="none" stroke="#e6ecf5" stroke-width="1.4" stroke-linecap="round" stroke-linejoin="round"/></svg>
<div style="position:absolute;left:16px;top:909px;width:44px;height:44px;border-radius:50%;background:#fff;box-shadow:0 2px 8px rgba(0,0,0,0.25)"></div>
<svg style="position:absolute;left:26px;top:919px;width:24px;height:24px" viewBox="0 0 24 24" fill="none" stroke="#666" stroke-width="1.7" stroke-linecap="round" stroke-linejoin="round"><path d="M11.5 3.2A9 9 0 1 0 20.8 12.8A3.2 3.2 0 0 1 17 9.6A3.2 3.2 0 0 1 13.6 6.4A3 3 0 0 1 11.5 3.2z"/><path d="M8 9.5h.01M12.5 12.5h.01M8.5 15.5h.01M14.5 17h.01M16 14h.01"/></svg>
</div>
<div id="sb"><div class="th"></div></div>
</body></html>
